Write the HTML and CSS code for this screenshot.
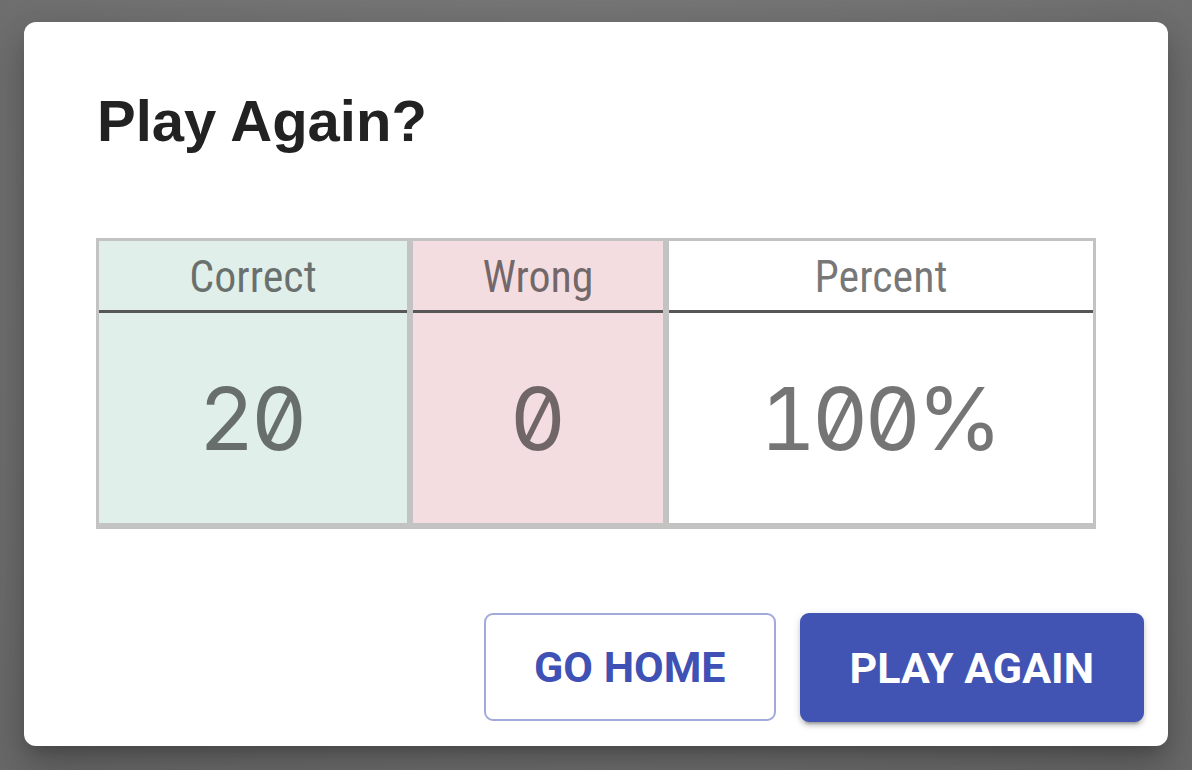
FILE: index.html
```html
<!DOCTYPE html>
<html lang="en">
<head>
<meta charset="utf-8">
<title>Play Again?</title>
<link rel="stylesheet" href="styles.css">
</head>
<body>
<div class="backdrop">
  <div class="dialog" role="dialog" aria-labelledby="dlg-title">
    <h2 class="dialog-title" id="dlg-title">Play Again?</h2>
    <div class="score-table">
      <div class="score-col col-correct">
        <div class="score-head">Correct</div>
        <div class="score-value">20</div>
      </div>
      <div class="score-col col-wrong">
        <div class="score-head">Wrong</div>
        <div class="score-value">0</div>
      </div>
      <div class="score-col col-percent">
        <div class="score-head">Percent</div>
        <div class="score-value">100%</div>
      </div>
    </div>
    <div class="dialog-actions">
      <button class="btn btn-outlined" type="button">Go Home</button>
      <button class="btn btn-filled" type="button">Play Again</button>
    </div>
  </div>
</div>
</body>
</html>
```

FILE: styles.css
```css
html, body {
  margin: 0;
  padding: 0;
  height: 100%;
}

body {
  background: #757575;
  font-family: "Liberation Sans", Arial, sans-serif;
}

.backdrop {
  width: 1192px;
  height: 770px;
  background: radial-gradient(ellipse at 50% 30%, #7a7a7a 0%, #737373 60%, #6a6a6a 100%);
  padding: 22px 24px 0 24px;
  box-sizing: border-box;
}

.dialog {
  width: 1144px;
  height: 724px;
  box-sizing: border-box;
  background: #ffffff;
  border-radius: 12px;
  padding: 66px 72px 24px 72px;
  display: flex;
  flex-direction: column;
  box-shadow: 0 11px 15px -7px rgba(0,0,0,.2), 0 24px 38px 3px rgba(0,0,0,.14), 0 9px 46px 8px rgba(0,0,0,.12);
}

.dialog-title {
  margin: 0;
  font-family: "Liberation Sans", Arial, sans-serif;
  font-weight: 700;
  font-size: 58px;
  line-height: 66px;
  color: #222222;
  padding-left: 1px;
}

.score-table {
  margin-top: 84px;
  display: flex;
  gap: 6px;
  background: #c3c3c3;
  border-style: solid;
  border-color: #c3c3c3;
  border-width: 3px 3px 6px 3px;
}

.score-col {
  display: flex;
  flex-direction: column;
}

.col-correct { width: 308px; background: #e0efea; }
.col-wrong { width: 250px; background: #f4dde0; }
.col-percent { width: 424px; background: #ffffff; }

.score-head {
  height: 72px;
  border-bottom: 3px solid #575757;
  display: flex;
  align-items: center;
  justify-content: center;
  font-family: "Roboto Condensed", "Roboto", sans-serif;
  font-size: 44px;
  color: rgba(0,0,0,0.54);
  padding-top: 2px;
  box-sizing: border-box;
}

.score-value {
  height: 210px;
  display: flex;
  align-items: center;
  justify-content: center;
  font-family: "Inter", "DejaVu Sans Mono", monospace;
  font-variant-numeric: tabular-nums slashed-zero;
  font-feature-settings: "tnum" 1, "zero" 1;
  font-weight: 400;
  font-size: 87px;
  letter-spacing: -4px;
  text-indent: -4px;
  color: rgba(0,0,0,0.54);
  padding-top: 0;
  box-sizing: border-box;
}

.dialog-actions {
  margin-top: 84px;
  display: flex;
  justify-content: flex-end;
  gap: 24px;
  margin-right: -48px;
}

.btn {
  height: 108px;
  padding: 0 48px;
  border-radius: 9px;
  font-family: "Roboto", "Liberation Sans", sans-serif;
  font-weight: 700;
  font-size: 43px;
  text-transform: uppercase;
  letter-spacing: 0;
  cursor: pointer;
  box-sizing: border-box;
}

.btn-outlined {
  background: #ffffff;
  color: #3f51b5;
  border: 2px solid #a2aadc;
  padding: 0 48px;
}

.btn-filled {
  height: 109px;
  background: #4254b3;
  color: #ffffff;
  border: 2px solid #4254b3;
  padding: 0 48px;
  box-shadow: 0 6px 2px -4px rgba(0,0,0,.2), 0 4px 4px 0 rgba(0,0,0,.14), 0 2px 10px 0 rgba(0,0,0,.12);
}
```
